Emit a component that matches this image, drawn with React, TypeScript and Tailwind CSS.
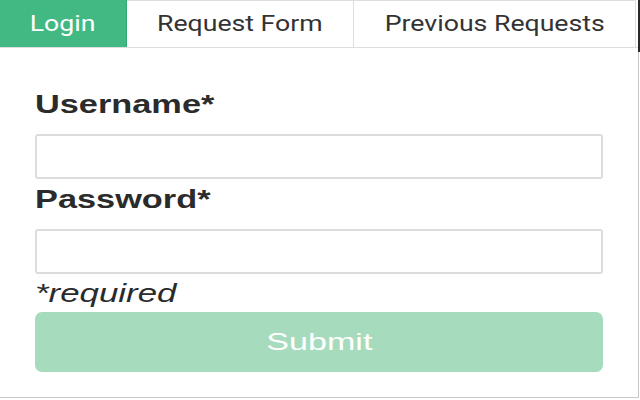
import * as React from 'react'

const tabs = [
  { label: 'Login', width: 'w-[127px]', active: true },
  { label: 'Request Form', width: 'w-[227px]', active: false },
  { label: 'Previous Requests', width: 'w-[282px]', active: false },
]

function Tab({ label, width, active }: { label: string; width: string; active: boolean }) {
  return (
    <div
      className={
        active
          ? `${width} h-full flex items-center justify-center bg-[#42b883] border-r border-[#33a570] text-white`
          : `${width} h-full flex items-center justify-center bg-white border-r border-t border-[#dedede] text-[#333]`
      }
    >
      <span className="inline-block scale-x-[1.24] text-[21.5px] leading-none font-['Roboto',sans-serif]">
        {label}
      </span>
    </div>
  )
}

function Field({ label, type }: { label: string; type: string }) {
  return (
    <>
      <label className="block h-[30px] leading-[30px] text-[26px] font-bold text-[#2b2b2b] font-['Liberation_Sans',Arial,sans-serif]">
        <span className="inline-block origin-left scale-x-[1.32]">{label}</span>
      </label>
      <input
        type={type}
        className="mt-[15px] block w-full h-[45px] rounded-[3px] border-2 border-[#dcdcdc] bg-white px-3 outline-none"
      />
    </>
  )
}

export default function App() {
  return (
    <div className="relative w-[640px] h-[400px] bg-white overflow-hidden">
      <div className="w-[639px] h-[398px] border-r border-b border-[#c9c9c9]">
        <nav className="flex h-[48px] border-b border-[#dedede]">
          {tabs.map((t) => (
            <Tab key={t.label} {...t} />
          ))}
        </nav>

        <form className="pl-[35px] pr-[35px] pt-[41px]" onSubmit={(e) => e.preventDefault()}>
          <Field label="Username*" type="text" />
          <div className="h-[5px]" />
          <Field label="Password*" type="password" />
          <div className="mt-[4px] h-[30px] leading-[30px] text-[26px] italic text-[#2b2b2b] font-['Liberation_Sans',Arial,sans-serif]">
            <span className="inline-block origin-left scale-x-[1.34]">*required</span>
          </div>
          <button
            type="submit"
            className="mt-[4px] flex w-full h-[60px] items-center justify-center rounded-[7px] bg-[#a7dbbd] text-white"
          >
            <span className="inline-block scale-x-[1.42] text-[24px] leading-none font-['Liberation_Sans',Arial,sans-serif]">
              Submit
            </span>
          </button>
        </form>
      </div>
      {/* window edge */}
      <div aria-hidden className="absolute right-0 top-0 w-[2px] h-[52px] bg-[#2a2a2a]" />
    </div>
  )
}
